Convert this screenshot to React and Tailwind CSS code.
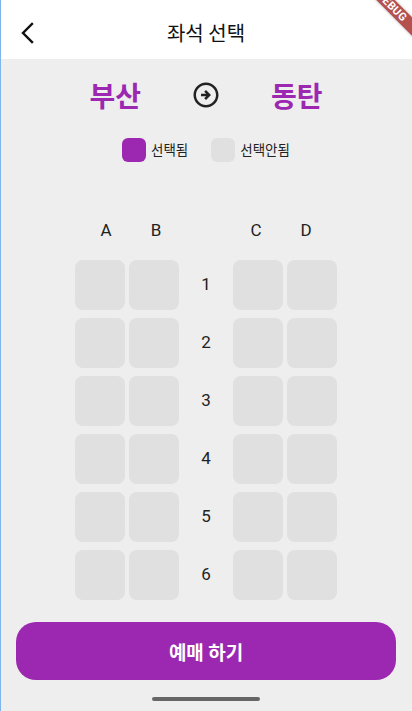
import React from "react";

const KR = { fontFamily: '"Noto Sans CJK KR", "Noto Sans", sans-serif' };
const RB = { fontFamily: 'Roboto, "Noto Sans", sans-serif' };

function Seat() {
  return (
    <div className="w-[54px] h-[58px] flex items-center justify-center">
      <div className="w-[50px] h-[50px] rounded-[8px] bg-[#e0e0e0]" />
    </div>
  );
}

export default function App() {
  const rows = [1, 2, 3, 4, 5, 6];
  return (
    <div className="relative w-[412px] h-[711px] overflow-hidden bg-[#eeeeee]">
      {/* App bar */}
      <div className="h-[59px] bg-white flex items-center pt-[6px] relative">
        <div className="w-[56px] flex items-center justify-center">
          <svg width="24" height="24" viewBox="0 0 24 24">
            <polyline points="16,3 7,12 16,21" fill="none" stroke="#111" strokeWidth="2.4" strokeLinecap="square" />
          </svg>
        </div>
        <div className="absolute left-0 right-0 top-[6px] bottom-0 flex items-center justify-center pointer-events-none">
          <span className="text-[20px] text-[#111] leading-none" style={KR}>좌석 선택</span>
        </div>
      </div>

      {/* Route */}
      <div className="h-[72px] flex items-center justify-center gap-[50px]">
        <span className="text-[28px] font-bold text-[#9c27b0] leading-none" style={KR}>부산</span>
        <svg width="30" height="30" viewBox="0 0 24 24">
          <path fill="#222" d="M22 12c0-5.52-4.48-10-10-10S2 6.48 2 12s4.48 10 10 10 10-4.48 10-10zM4 12c0-4.42 3.58-8 8-8s8 3.58 8 8-3.58 8-8 8-8-3.58-8-8zm12 0-4 4-1.41-1.41L12.17 13H8v-2h4.17l-1.59-1.59L12 8l4 4z" />
        </svg>
        <span className="text-[28px] font-bold text-[#9c27b0] leading-none" style={KR}>동탄</span>
      </div>

      {/* Legend */}
      <div className="h-[38px] flex items-center justify-center">
        <div className="w-[24px] h-[24px] rounded-[6px] bg-[#9c27b0]" />
        <span className="ml-[5px] text-[13.5px] text-[#222] leading-none" style={KR}>선택됨</span>
        <div className="ml-[23px] w-[24px] h-[24px] rounded-[6px] bg-[#e0e0e0]" />
        <span className="ml-[5px] text-[13.5px] text-[#222] leading-none" style={KR}>선택안됨</span>
      </div>

      {/* Column headers */}
      <div className="mt-[37px] h-[50px] flex items-center justify-center">
        {["A", "B", "", "C", "D"].map((c, i) => (
          <div key={i} className="w-[50px] flex items-center justify-center text-[17px] text-[#222]" style={RB}>
            {c}
          </div>
        ))}
      </div>

      {/* Seats */}
      <div className="flex flex-col items-center">
        {rows.map((r) => (
          <div key={r} className="flex">
            <Seat />
            <Seat />
            <div className="w-[50px] h-[58px] flex items-center justify-center text-[17px] text-[#222]" style={RB}>
              {r}
            </div>
            <Seat />
            <Seat />
          </div>
        ))}
      </div>

      {/* Button */}
      <div className="mt-[18px] mx-[16px] h-[58px] rounded-[20px] bg-[#9c27b0] flex items-center justify-center">
        <span className="text-[19px] font-bold text-white leading-none" style={KR}>예매 하기</span>
      </div>

      {/* Home indicator */}
      <div className="mt-[17px] flex justify-center">
        <div className="w-[108px] h-[4px] rounded-full bg-[#666666]" />
      </div>

      {/* Left edge line */}
      <div className="absolute left-0 top-0 bottom-0 w-[1px] bg-[#7fb6ea]" />

      {/* Debug banner */}
      <div className="absolute w-[120px] h-[13px] left-[332px] top-[0px] rotate-45 bg-[#b5504f] flex items-center justify-center shadow-[0_0_3px_rgba(0,0,0,0.3)]">
        <span className="text-[11px] font-bold text-white leading-none tracking-[0.3px]" style={RB}>DEBUG</span>
      </div>
    </div>
  );
}
